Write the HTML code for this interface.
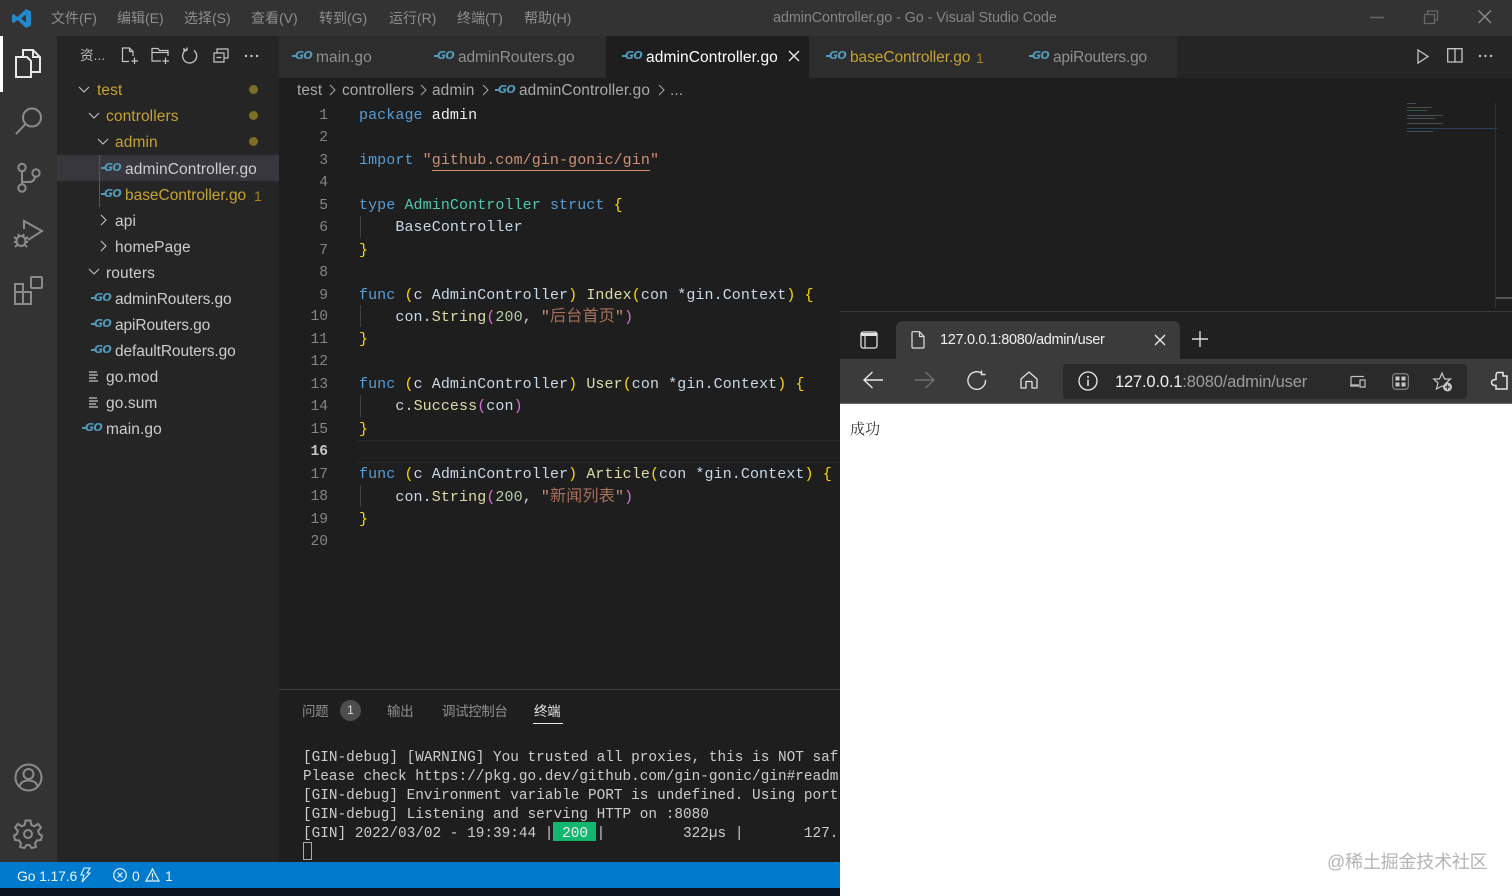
<!DOCTYPE html>
<html><head><meta charset="utf-8"><style>
html,body{margin:0;padding:0;width:1512px;height:896px;overflow:hidden;background:#1e1e1e}
body{position:relative;font-family:"Liberation Sans","Noto Sans CJK SC",sans-serif}
.a{position:absolute}
.t{position:absolute;white-space:nowrap;line-height:22px;height:22px;font-size:15.5px;color:#cccccc;letter-spacing:.1px}
.w{letter-spacing:-.1px}
.g{position:absolute;width:18px;height:12px;font:italic 700 11px/12px "DejaVu Sans",sans-serif;color:#519aba;letter-spacing:-.7px;text-align:right}
.g:before{content:"";position:absolute;left:-2px;top:5px;width:4px;height:1.5px;background:#519aba}
.y{color:#c5a332}
.m{position:absolute;left:359px;font:15px/22px "Liberation Mono","Noto Sans CJK SC",monospace;white-space:pre;color:#d4d4d4;height:22px;letter-spacing:.09px}
.z{font-size:16px;letter-spacing:.25px;color:#a8705a}
.n{position:absolute;left:298px;width:30px;text-align:right;font:14.6px/22px "Liberation Mono",monospace;color:#858585;height:22px}
.k{color:#569cd6}.c{color:#4ec9b0}.s{color:#ce9178}.f{color:#dcdcaa}.b{color:#ffd700}.p{color:#da70d6}.v{color:#c8d8e8}
.term{position:absolute;left:303px;width:536px;overflow:hidden;font:14.4px/19px "Liberation Mono",monospace;color:#cccccc;white-space:pre;height:19px}
svg{position:absolute;overflow:visible;fill:none}
.ig{position:absolute;left:359.5px;width:1px;background:#404040}
.mn{color:#8e8e8e;font-size:14px;letter-spacing:0}
.bc{color:#a9a9a9;font-size:15.4px;top:80px}
.pt{font-size:13.5px;color:#8f8f8f;letter-spacing:-.4px;top:701px}
.mm{position:absolute;left:1407px;height:1px;opacity:.55}
</style></head><body>

<!-- title bar -->
<div class="a" style="left:0;top:0;width:1512px;height:36px;background:#333333"></div>
<svg style="left:11px;top:8px" width="21" height="21" viewBox="0 0 21 21"><path d="M15 1 L20 3.5 V17.5 L15 20 L6.5 12 L2.5 15 L1 14 V7 L2.5 6 L6.5 9 Z M15 6.5 L10 10.5 L15 14.5 Z" fill="#2489ca" fill-rule="evenodd"/></svg>
<span class="t mn" style="left:51px;top:7px">文件(F)</span>
<span class="t mn" style="left:117px;top:7px">编辑(E)</span>
<span class="t mn" style="left:184px;top:7px">选择(S)</span>
<span class="t mn" style="left:251px;top:7px">查看(V)</span>
<span class="t mn" style="left:319px;top:7px">转到(G)</span>
<span class="t mn" style="left:389px;top:7px">运行(R)</span>
<span class="t mn" style="left:457px;top:7px">终端(T)</span>
<span class="t mn" style="left:524px;top:7px">帮助(H)</span>
<span class="t" style="left:773px;top:7px;color:#858585;font-size:14.4px;letter-spacing:-.09px">adminController.go - Go - Visual Studio Code</span>
<svg style="left:1370px;top:10px" width="15" height="15"><path d="M0 7.5H14" stroke="#666" stroke-width="1.5"/></svg>
<svg style="left:1424px;top:10px" width="15" height="15"><path d="M0.5 4.5H10.5V13.5H0.5Z M3.5 4V1H13.5V10H11" stroke="#666" stroke-width="1.3"/></svg>
<svg style="left:1478px;top:10px" width="14" height="14"><path d="M0.5 0.5L13 13M13 0.5L0.5 13" stroke="#8a8a8a" stroke-width="1.4"/></svg>

<!-- activity bar -->
<div class="a" style="left:0;top:36px;width:57px;height:826px;background:#333333"></div>
<div class="a" style="left:0;top:36px;width:2.5px;height:56px;background:#fff"></div>
<svg style="left:14px;top:48px" width="28" height="32" viewBox="0 0 28 32" stroke="#e8e8e8" stroke-width="2"><path d="M9 8V2H19L26 9V24H17"/><path d="M19 2V9H26"/><path d="M2 9H13L17 13V29H2Z"/></svg>
<svg style="left:14px;top:106px" width="30" height="30" viewBox="0 0 30 30" stroke="#8b8b8b" stroke-width="2"><circle cx="18" cy="11.5" r="9"/><path d="M11.5 18L2 28"/></svg>
<svg style="left:16px;top:162px" width="26" height="32" viewBox="0 0 26 32" stroke="#8b8b8b" stroke-width="2"><circle cx="6" cy="5.5" r="3.7"/><circle cx="6" cy="26" r="3.7"/><circle cx="20" cy="11" r="3.7"/><path d="M6 9.5V22M6 20H13Q18 20 19 15"/></svg>
<svg style="left:13px;top:218px" width="32" height="32" viewBox="0 0 32 32" stroke="#8b8b8b" stroke-width="2"><path d="M11 11V3L29 13L15 22"/><ellipse cx="8" cy="23" rx="4.5" ry="5"/><path d="M1 19L4 21M1 24H3M2 29L4 27M15 19L12 21M15 24H13M14 29L12 27M5 16L6 18M11 16L10 18"/></svg>
<svg style="left:14px;top:276px" width="30" height="30" viewBox="0 0 30 30" stroke="#8b8b8b" stroke-width="2"><path d="M1 8H9V16H17V28H1ZM1 16H9V28"/><rect x="17" y="1" width="11" height="11" rx="1"/></svg>
<svg style="left:14px;top:763px" width="29" height="29" viewBox="0 0 29 29" stroke="#8b8b8b" stroke-width="2"><circle cx="14.5" cy="14.5" r="13"/><circle cx="14.5" cy="11" r="5"/><path d="M5.5 23.5Q7 17.5 14.5 17.5T23.5 23.5"/></svg>
<svg style="left:13px;top:819px" width="30" height="30" viewBox="0 0 30 30" stroke="#8b8b8b" stroke-width="2"><circle cx="15" cy="15" r="4"/><path d="M12.5 1.5H17.5L18.3 6L21.5 7.3L25 4.8L28 8.5L25.2 11.8L26 15L29 16.5L28 21L23.8 21.5L22 24.5L23 28L18.5 29L16.5 26H13.5L11.5 29L7 28L8 24.5L6.2 21.5L2 21L1 16.5L4 15L4.8 11.8L2 8.5L5 4.8L8.5 7.3L11.7 6Z" stroke-linejoin="round"/></svg>

<!-- sidebar -->
<div class="a" style="left:57px;top:36px;width:222px;height:826px;background:#252526"></div>
<span class="t" style="left:80px;top:45px;font-size:13.5px;color:#bbb">资...</span>
<svg style="left:121px;top:47px" width="18" height="18" viewBox="0 0 18 18" stroke="#c5c5c5" stroke-width="1.2"><path d="M8 14.5H1.5V1H8.5L12 4.5V9M8.5 1V4.5H12M13.5 10.5V17M10.5 14H17"/></svg>
<svg style="left:151px;top:47px" width="19" height="18" viewBox="0 0 19 18" stroke="#c5c5c5" stroke-width="1.2"><path d="M10 14H1V1.5H7L8.5 3.5H17V9M1 5.5H17M14.5 10.5V17M11.5 14H18"/></svg>
<svg style="left:182px;top:47px" width="16" height="17" viewBox="0 0 16 17" stroke="#c5c5c5" stroke-width="1.3"><path d="M5 2.5A7 7 0 1 0 12 3.5M2 1V3.5H5"/><path d="M5 0.5V3H2.5"/></svg>
<svg style="left:213px;top:48px" width="16" height="15" viewBox="0 0 16 15" stroke="#c5c5c5" stroke-width="1.2"><path d="M1 5H11V14H1ZM4 4.5V1H15V10H11.5M3.5 9.5H8.5"/></svg>
<svg style="left:244px;top:54px" width="15" height="4"><circle cx="2" cy="2" r="1.2" fill="#c5c5c5"/><circle cx="7.5" cy="2" r="1.2" fill="#c5c5c5"/><circle cx="13" cy="2" r="1.2" fill="#c5c5c5"/></svg>

<div class="a" style="left:57px;top:155px;width:222px;height:26px;background:#37373d"></div>
<div class="a" style="left:99px;top:155px;width:1px;height:52px;background:#585858"></div>

<svg style="left:78px;top:86px" width="12" height="8"><path d="M1 1L6 6L11 1" stroke="#c5c5c5" stroke-width="1.1"/></svg>
<svg style="left:88px;top:112px" width="12" height="8"><path d="M1 1L6 6L11 1" stroke="#c5c5c5" stroke-width="1.1"/></svg>
<svg style="left:97px;top:138px" width="12" height="8"><path d="M1 1L6 6L11 1" stroke="#c5c5c5" stroke-width="1.1"/></svg>
<svg style="left:100px;top:214px" width="8" height="12"><path d="M1 1L6 6L1 11" stroke="#c5c5c5" stroke-width="1.1"/></svg>
<svg style="left:100px;top:240px" width="8" height="12"><path d="M1 1L6 6L1 11" stroke="#c5c5c5" stroke-width="1.1"/></svg>
<svg style="left:88px;top:268px" width="12" height="8"><path d="M1 1L6 6L11 1" stroke="#c5c5c5" stroke-width="1.1"/></svg>

<span class="t y" style="left:97px;top:80px">test</span>
<span class="t y" style="left:106px;top:106px">controllers</span>
<span class="t y" style="left:115px;top:132px">admin</span>
<div class="a" style="left:249px;top:85px;width:9px;height:9px;border-radius:50%;background:#7d6f22"></div>
<div class="a" style="left:249px;top:111px;width:9px;height:9px;border-radius:50%;background:#7d6f22"></div>
<div class="a" style="left:249px;top:137px;width:9px;height:9px;border-radius:50%;background:#7d6f22"></div>

<span class="g" style="left:103px;top:162px">GO</span><span class="t" style="left:125px;top:158.5px">adminController.go</span>
<span class="g" style="left:103px;top:188px">GO</span><span class="t y" style="left:125px;top:184.5px;letter-spacing:-.02px">baseController.go</span><span class="t" style="left:254px;top:184.5px;color:#9c8522;font-size:14px">1</span>
<span class="t" style="left:115px;top:210.5px">api</span>
<span class="t" style="left:115px;top:236.5px">homePage</span>
<span class="t" style="left:106px;top:262.5px">routers</span>
<span class="g" style="left:93px;top:292px">GO</span><span class="t w" style="left:115px;top:288.5px">adminRouters.go</span>
<span class="g" style="left:93px;top:318px">GO</span><span class="t w" style="left:115px;top:314.5px">apiRouters.go</span>
<span class="g" style="left:93px;top:344px">GO</span><span class="t w" style="left:115px;top:340.5px">defaultRouters.go</span>
<svg style="left:89px;top:371px" width="10" height="11"><path d="M0 1H8M0 4H9M0 7H7M0 10H9" stroke="#c5c5c5" stroke-width="1.2"/></svg>
<span class="t" style="left:106px;top:366.5px">go.mod</span>
<svg style="left:89px;top:397px" width="10" height="11"><path d="M0 1H8M0 4H9M0 7H7M0 10H9" stroke="#c5c5c5" stroke-width="1.2"/></svg>
<span class="t" style="left:106px;top:392.5px">go.sum</span>
<span class="g" style="left:84px;top:422px">GO</span><span class="t" style="left:106px;top:418.5px">main.go</span>

<!-- tabs -->
<div class="a" style="left:279px;top:36px;width:1233px;height:42px;background:#252526"></div>
<div class="a" style="left:279px;top:36px;width:898px;height:42px;background:#2d2d2d"></div>
<div class="a" style="left:606px;top:36px;width:203px;height:42px;background:#1e1e1e"></div>
<span class="g" style="left:294px;top:50px">GO</span><span class="t" style="left:316px;top:46.5px;color:#8f8f8f">main.go</span>
<span class="g" style="left:436px;top:50px">GO</span><span class="t w" style="left:458px;top:46.5px;color:#8f8f8f">adminRouters.go</span>
<span class="g" style="left:624px;top:50px">GO</span><span class="t" style="left:646px;top:46.5px;color:#fff">adminController.go</span>
<svg style="left:789px;top:51px" width="10" height="10"><path d="M0 0L10 10M10 0L0 10" stroke="#eee" stroke-width="1.3"/></svg>
<span class="g" style="left:828px;top:50px">GO</span><span class="t y" style="left:850px;top:46.5px;letter-spacing:-.07px">baseController.go</span><span class="t" style="left:976px;top:46.5px;color:#9c8522;font-size:14px">1</span>
<span class="g" style="left:1031px;top:50px">GO</span><span class="t" style="left:1053px;top:46.5px;color:#8f8f8f;letter-spacing:-.2px">apiRouters.go</span>

<svg style="left:1417px;top:49px" width="12" height="15"><path d="M1 1L11 7.5L1 14Z" stroke="#c5c5c5" stroke-width="1.3"/></svg>
<svg style="left:1447px;top:48px" width="16" height="15"><path d="M.7.7H15V14H.7ZM8 .7V14" stroke="#c5c5c5" stroke-width="1.3"/></svg>
<svg style="left:1478px;top:54px" width="15" height="4"><circle cx="2" cy="2" r="1.2" fill="#c5c5c5"/><circle cx="7.5" cy="2" r="1.2" fill="#c5c5c5"/><circle cx="13" cy="2" r="1.2" fill="#c5c5c5"/></svg>

<!-- breadcrumbs -->
<span class="t bc" style="left:297px">test</span>
<svg style="left:329px;top:84px" width="7" height="12"><path d="M1 1L6 6L1 11" stroke="#a9a9a9"/></svg>
<span class="t bc" style="left:342px">controllers</span>
<svg style="left:420px;top:84px" width="7" height="12"><path d="M1 1L6 6L1 11" stroke="#a9a9a9"/></svg>
<span class="t bc" style="left:432px">admin</span>
<svg style="left:482px;top:84px" width="7" height="12"><path d="M1 1L6 6L1 11" stroke="#a9a9a9"/></svg>
<span class="g" style="left:497px;top:84px">GO</span>
<span class="t bc" style="left:519px">adminController.go</span>
<svg style="left:658px;top:84px" width="7" height="12"><path d="M1 1L6 6L1 11" stroke="#a9a9a9"/></svg>
<span class="t bc" style="left:670px">...</span>

<!-- line numbers -->
<div class="n" style="top:105px">1</div><div class="n" style="top:127px">2</div><div class="n" style="top:150px">3</div><div class="n" style="top:172px">4</div>
<div class="n" style="top:195px">5</div><div class="n" style="top:217px">6</div><div class="n" style="top:240px">7</div><div class="n" style="top:262px">8</div>
<div class="n" style="top:285px">9</div><div class="n" style="top:306px">10</div><div class="n" style="top:329px">11</div><div class="n" style="top:351px">12</div>
<div class="n" style="top:374px">13</div><div class="n" style="top:396px">14</div><div class="n" style="top:419px">15</div><div class="n" style="top:441px;color:#c6c6c6;font-weight:700">16</div>
<div class="n" style="top:464px">17</div><div class="n" style="top:486px">18</div><div class="n" style="top:509px">19</div><div class="n" style="top:531px">20</div>

<div class="a" style="left:357px;top:440px;width:483px;height:21px;border-top:1px solid #282828;border-bottom:1px solid #282828"></div>
<div class="ig" style="top:216px;height:22px"></div><div class="ig" style="top:305px;height:22px"></div><div class="ig" style="top:395px;height:22px"></div><div class="ig" style="top:485px;height:22px"></div>

<!-- code -->
<div class="m" style="top:105px"><span class="k">package</span> <span style="color:#eee">admin</span></div>
<div class="m" style="top:150px"><span class="k">import</span> <span class="s">"github.com/gin-gonic/gin"</span></div>
<div class="a" style="left:432px;top:169.5px;width:218px;height:1.5px;background:#d98c6a"></div>
<div class="m" style="top:195px"><span class="k">type</span> <span class="c">AdminController</span> <span class="k">struct</span> <span class="b">{</span></div>
<div class="m" style="top:217px">    <span class="v">BaseController</span></div>
<div class="m" style="top:240px"><span class="b">}</span></div>
<div class="m" style="top:285px"><span class="k">func</span> <span class="b">(</span><span class="v">c</span> <span class="v">AdminController</span><span class="b">)</span> <span class="f">Index</span><span class="b">(</span><span class="v">con</span> <span class="v">*gin.Context</span><span class="b">)</span> <span class="b">{</span></div>
<div class="m" style="top:306px">    <span class="v">con.</span><span class="f">String</span><span class="p">(</span><span style="color:#b5cea8">200</span>, <span class="s">"<span class="z">后台首页</span>"</span><span class="p">)</span></div>
<div class="m" style="top:329px"><span class="b">}</span></div>
<div class="m" style="top:374px"><span class="k">func</span> <span class="b">(</span><span class="v">c</span> <span class="v">AdminController</span><span class="b">)</span> <span class="f">User</span><span class="b">(</span><span class="v">con</span> <span class="v">*gin.Context</span><span class="b">)</span> <span class="b">{</span></div>
<div class="m" style="top:396px">    <span class="v">c.</span><span class="f">Success</span><span class="p">(</span><span class="v">con</span><span class="p">)</span></div>
<div class="m" style="top:419px"><span class="b">}</span></div>
<div class="m" style="top:464px"><span class="k">func</span> <span class="b">(</span><span class="v">c</span> <span class="v">AdminController</span><span class="b">)</span> <span class="f">Article</span><span class="b">(</span><span class="v">con</span> <span class="v">*gin.Context</span><span class="b">)</span> <span class="b">{</span></div>
<div class="m" style="top:486px">    <span class="v">con.</span><span class="f">String</span><span class="p">(</span><span style="color:#b5cea8">200</span>, <span class="s">"<span class="z">新闻列表</span>"</span><span class="p">)</span></div>
<div class="m" style="top:509px"><span class="b">}</span></div>

<!-- minimap -->
<div class="mm" style="top:103px;width:9px;background:#5a7a94"></div>
<div class="mm" style="top:107px;width:25px;background:#8a6f5c"></div>
<div class="mm" style="top:110px;width:20px;background:#4f8a7d"></div>
<div class="mm" style="top:115px;width:36px;background:#6a7a80"></div>
<div class="mm" style="top:118px;width:28px;background:#6a7a80"></div>
<div class="mm" style="top:123px;width:36px;background:#6a7a80"></div>
<div class="mm" style="top:128px;width:90px;background:#2a4258;opacity:1"></div>
<div class="mm" style="top:131px;width:26px;background:#6a7a80"></div>
<div class="a" style="left:1495px;top:103px;width:1px;height:205px;background:#333"></div>
<div class="a" style="left:1496px;top:297px;width:16px;height:2px;background:#555"></div>

<!-- panel -->
<div class="a" style="left:279px;top:689px;width:561px;height:1px;background:#404040"></div>
<span class="t pt" style="left:302px">问题</span>
<div class="a" style="left:340px;top:700px;width:21px;height:21px;border-radius:50%;background:#4d4d4d;color:#ddd;font-size:12px;line-height:20px;text-align:center">1</div>
<span class="t pt" style="left:387px">输出</span>
<span class="t pt" style="left:442px">调试控制台</span>
<span class="t pt" style="left:534px;color:#e7e7e7">终端</span>
<div class="a" style="left:533px;top:723px;width:30px;height:1px;background:#e7e7e7"></div>

<div class="term" style="top:749px">[GIN-debug] [WARNING] You trusted all proxies, this is NOT safe</div>
<div class="term" style="top:768px">Please check https://pkg.go.dev/github.com/gin-gonic/gin#readme</div>
<div class="term" style="top:787px">[GIN-debug] Environment variable PORT is undefined. Using port</div>
<div class="term" style="top:806px">[GIN-debug] Listening and serving HTTP on :8080</div>
<div class="a" style="left:553px;top:822px;width:43px;height:19px;background:#12b76f"></div>
<div class="term" style="top:824.5px">[GIN] 2022/03/02 - 19:39:44 |<span style="color:#eee"> 200 </span>|         322µs |       127.</div>
<div class="a" style="left:303px;top:842px;width:7px;height:16px;border:1px solid #aaa"></div>

<!-- status bar -->
<div class="a" style="left:0;top:862px;width:840px;height:26px;background:#007acc"></div>
<div class="a" style="left:0;top:888px;width:840px;height:8px;background:#0b1220"></div>
<span class="t" style="left:17px;top:864.5px;color:#e8f3fb;font-size:14px;letter-spacing:-.15px">Go 1.17.6</span>
<svg style="left:80px;top:867px" width="11" height="16" viewBox="0 0 11 16" stroke="#e8f3fb" stroke-width="1.1"><path d="M4 1H10L7 6H10L2 15L4 8H1Z"/></svg>
<svg style="left:113px;top:868px" width="14" height="14" viewBox="0 0 14 14" stroke="#e8f3fb" stroke-width="1.2"><circle cx="7" cy="7" r="6.3"/><path d="M4.5 4.5L9.5 9.5M9.5 4.5L4.5 9.5"/></svg>
<span class="t" style="left:132px;top:864.5px;color:#e8f3fb;font-size:14px">0</span>
<svg style="left:145px;top:868px" width="15" height="14" viewBox="0 0 15 14" stroke="#e8f3fb" stroke-width="1.2"><path d="M7.5 1L14 13H1ZM7.5 5V9.5M7.5 10.5V12"/></svg>
<span class="t" style="left:165px;top:864.5px;color:#e8f3fb;font-size:14px">1</span>

<!-- browser -->
<div class="a" style="left:840px;top:311px;width:672px;height:585px;background:#202020"></div>
<div class="a" style="left:840px;top:404px;width:672px;height:492px;background:#fff"></div>
<div class="a" style="left:840px;top:311px;width:672px;height:48px;background:#202020;border-top:1px solid #3a3a3a;box-sizing:border-box"></div>
<div class="a" style="left:840px;top:359px;width:672px;height:45px;background:#3b3b3b;border-bottom:1px solid #6a6a6a;box-sizing:border-box"></div>
<div class="a" style="left:896px;top:321px;width:284px;height:38px;background:#3b3b3b;border-radius:7px 7px 0 0"></div>
<svg style="left:860px;top:331px" width="18" height="18"><rect x="1" y="1" width="16" height="16" rx="2" stroke="#e0e0e0" stroke-width="1.3"/><path d="M1 5H17V2H1Z" fill="#e0e0e0"/><path d="M5 5V17" stroke="#e0e0e0" stroke-width="1.2"/></svg>
<svg style="left:911px;top:331px" width="14" height="18" viewBox="0 0 14 18" stroke="#e0e0e0" stroke-width="1.2"><path d="M1 1.5Q1 .7 2 .7H8.5L13 5.5V16Q13 17 12 17H2Q1 17 1 16ZM8.5 .7V5.5H13"/></svg>
<span class="t" style="left:940px;top:329px;color:#efefef;font-size:14.5px;letter-spacing:-.32px">127.0.0.1:8080/admin/user</span>
<svg style="left:1155px;top:335px" width="10" height="10"><path d="M0 0L10 10M10 0L0 10" stroke="#eee" stroke-width="1.3"/></svg>
<svg style="left:1192px;top:331px" width="16" height="16"><path d="M8 0V16M0 8H16" stroke="#ddd" stroke-width="1.4"/></svg>

<svg style="left:863px;top:371px" width="20" height="18" viewBox="0 0 20 18" stroke="#e8e8e8" stroke-width="1.4"><path d="M9.5 1L1 9L9.5 17M1 9H20"/></svg>
<svg style="left:915px;top:371px" width="20" height="18" viewBox="0 0 20 18" stroke="#6f6f6f" stroke-width="1.4"><path d="M10.5 1L19 9L10.5 17M19 9H0"/></svg>
<svg style="left:967px;top:370px" width="20" height="21" viewBox="0 0 20 21" stroke="#e0e0e0" stroke-width="1.4"><path d="M15 3.5A8.8 8.8 0 1 0 18.5 10"/><path d="M14.5 .5V4.5H18.5"/></svg>
<svg style="left:1020px;top:371px" width="18" height="18" viewBox="0 0 18 18" stroke="#e0e0e0" stroke-width="1.3"><path d="M1 8L9 1L17 8V17H12V10.5H6V17H1Z" stroke-linejoin="round"/></svg>
<div class="a" style="left:1063px;top:364px;width:404px;height:35px;background:#2a2a2a;border-radius:4px"></div>
<svg style="left:1078px;top:371px" width="20" height="20"><circle cx="10" cy="10" r="9" stroke="#eaeaea" stroke-width="1.3"/><path d="M10 8.5V15M10 5V7" stroke="#eaeaea" stroke-width="1.5"/></svg>
<span class="t" style="left:1115px;top:371px;color:#f0f0f0;font-size:16.5px;letter-spacing:-.17px">127.0.0.1<span style="color:#9d9d9d">:8080/admin/user</span></span>
<svg style="left:1349px;top:375px" width="17" height="13" stroke="#c0c0c0" stroke-width="1.2"><path d="M2 1.5V10H10M1 11H10M2 1.5H15M11 5H16V12H11Z"/></svg>
<svg style="left:1392px;top:373px" width="17" height="17"><rect x=".7" y=".7" width="15.6" height="15.6" rx="3" stroke="#999"/><rect x="3.5" y="3.5" width="4" height="4" fill="#c8c8c8"/><rect x="9.5" y="3.5" width="4" height="4" fill="#c8c8c8"/><rect x="3.5" y="9.5" width="4" height="4" fill="#c8c8c8"/><rect x="9.5" y="9.5" width="4" height="4" fill="#c8c8c8"/></svg>
<svg style="left:1433px;top:372px" width="20" height="20" viewBox="0 0 20 20"><path d="M9 1L11.5 7H17.5L13 11L14 16L9 14L3.5 17L5 11L.7 7H6.5Z" stroke="#c8c8c8" stroke-width="1.2"/><circle cx="14.5" cy="15" r="4.5" fill="#c8c8c8"/><path d="M12 15H17M14.5 12.5V17.5" stroke="#333" stroke-width="1.2"/></svg>
<svg style="left:1490px;top:371px" width="20" height="20" viewBox="0 0 20 20" stroke="#e8e8e8" stroke-width="1.5"><path d="M8 1.5H13V5H17V18H6V14.5Q1.5 14.5 1.5 11.5T6 8.5V5Q6 1.5 8 1.5Z"/></svg>

<span class="t" style="left:850px;top:418px;color:#333;font-family:'Noto Serif CJK SC','Noto Sans CJK SC',serif;font-size:15px">成功</span>
<span class="t" style="left:1327px;top:851px;color:#b4b4b4;font-size:18px;letter-spacing:-.2px">@稀土掘金技术社区</span>
</body></html>
